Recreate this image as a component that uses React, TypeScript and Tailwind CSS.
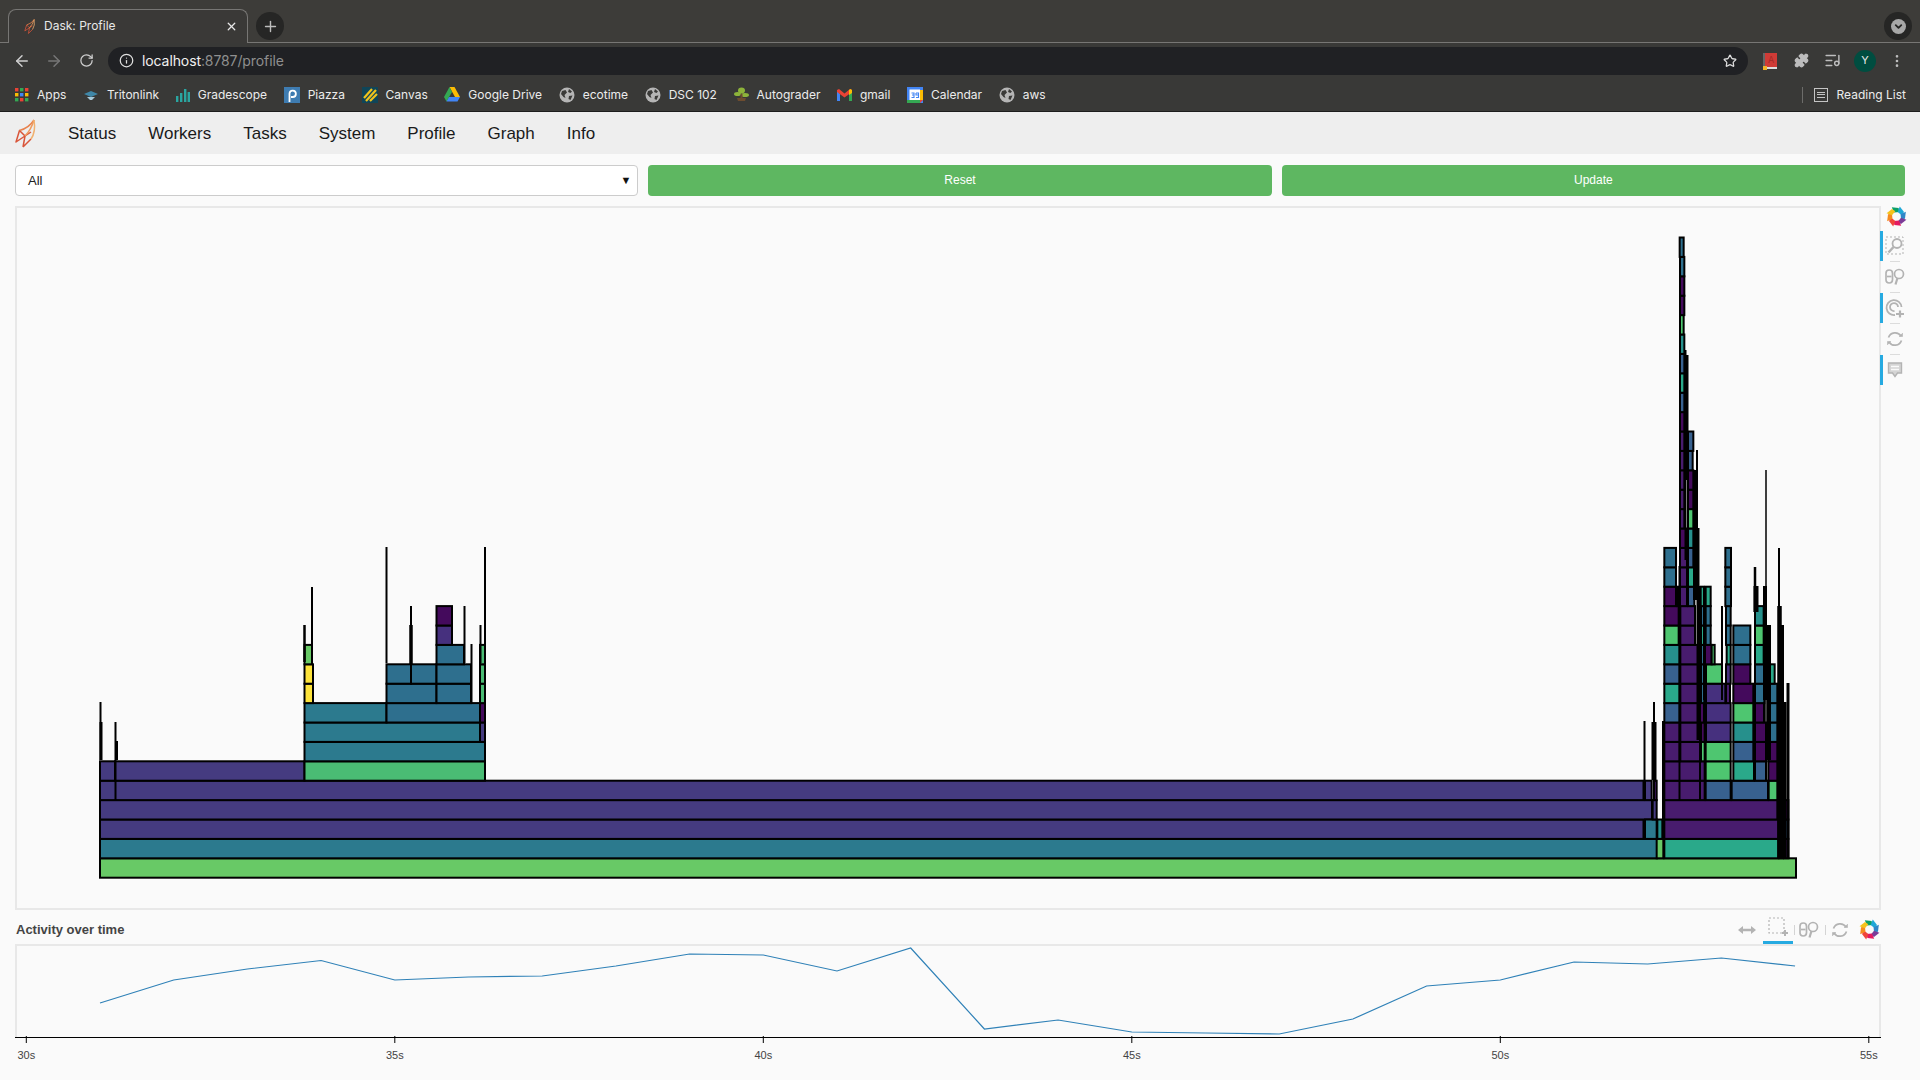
import React from 'react';
import { ArrowLeft, ArrowRight, RotateCw, Info, Star, Puzzle, ListMusic, MoreVertical, Plus, X, ChevronDown } from 'lucide-react';

const C: Record<string, string> = {
  L: '#68c966', T: '#2c7a8e', I: '#453b80', G: '#4abc74', B: '#2e6f8e', S: '#38618f',
  D: '#440a5c', P: '#481c6e', U: '#46307e', Y: '#fde33a', A: '#26908c', E: '#2aa98a', N: '#4ec670',
};

const BOTTOM = 877.7;
const STEP = 19.4;

// [level, x0, x1, colour], page coordinates
const leftBlocks: [number, number, number, string][] = [
  [0, 100, 1796, 'L'], [1, 100, 1657, 'T'], [2, 100, 1643.5, 'I'], [3, 100, 1652, 'I'], [4, 100, 1643.5, 'I'],
  [5, 100, 115, 'I'], [5, 115, 304.5, 'I'], [5, 304.5, 485, 'G'],
  [6, 304.5, 485, 'T'], [7, 304.5, 480, 'T'], [7, 480, 485, 'I'],
  [8, 304.5, 386.5, 'T'], [8, 386.5, 480, 'B'], [8, 480, 485, 'D'],
  [9, 304.5, 313, 'Y'], [9, 386.5, 436.5, 'B'], [9, 436.5, 471, 'B'], [9, 480, 485, 'G'],
  [10, 304.5, 313, 'Y'], [10, 386.5, 411, 'B'], [10, 411, 436.5, 'B'], [10, 436.5, 471, 'B'], [10, 480, 485, 'G'],
  [11, 304.5, 312, 'L'], [11, 436.5, 464, 'B'], [11, 480, 485, 'G'],
  [12, 436.5, 452, 'U'], [13, 436.5, 452, 'D'],
];

// right cluster, x read from a 3x crop that starts at x=1640
const rightBlocks: [number, number, number, string][] = [
  [1, 50, 70, 'L'], [1, 73, 415, 'E'], [1, 418, 428, 'L'], [1, 432, 445, 'P'],
  [2, 15, 50, 'T'], [2, 52, 67, 'A'], [2, 73, 415, 'P'], [2, 418, 430, 'A'], [2, 435, 445, 'S'],
  [3, 38, 50, 'I'], [3, 73, 412, 'P'], [3, 418, 445, 'D'],
  [4, 15, 35, 'I'], [4, 42, 50, 'P'], [4, 73, 194, 'P'], [4, 197, 272, 'S'], [4, 275, 384, 'S'], [4, 386, 412, 'N'],
  [5, 73, 194, 'P'], [5, 197, 272, 'N'], [5, 280, 342, 'E'], [5, 345, 378, 'S'], [5, 385, 412, 'D'],
  [6, 73, 119, 'P'], [6, 121, 181, 'P'], [6, 183, 194, 'N'], [6, 197, 272, 'N'], [6, 280, 340, 'S'], [6, 345, 378, 'D'], [6, 385, 412, 'D'],
  [7, 73, 119, 'P'], [7, 121, 181, 'P'], [7, 183, 194, 'D'], [7, 198, 272, 'U'], [7, 280, 340, 'A'], [7, 345, 378, 'D'], [7, 385, 412, 'B'],
  [8, 73, 119, 'S'], [8, 121, 176, 'P'], [8, 180, 192, 'D'], [8, 198, 272, 'U'], [8, 280, 340, 'N'], [8, 345, 372, 'D'], [8, 385, 412, 'B'],
  [9, 73, 119, 'E'], [9, 121, 176, 'P'], [9, 183, 193, 'B'], [9, 198, 256, 'U'], [9, 258, 270, 'P'], [9, 280, 340, 'D'], [9, 345, 373, 'B'], [9, 385, 412, 'B'],
  [10, 73, 119, 'S'], [10, 121, 176, 'P'], [10, 183, 193, 'B'], [10, 198, 246, 'N'], [10, 258, 272, 'U'], [10, 280, 331, 'D'], [10, 345, 373, 'B'], [10, 386, 404, 'E'],
  [11, 73, 119, 'A'], [11, 121, 176, 'P'], [11, 183, 193, 'B'], [11, 195, 215, 'D'], [11, 215, 224, 'N'], [11, 260, 272, 'E'], [11, 280, 331, 'B'], [11, 345, 371, 'E'],
  [12, 73, 116, 'N'], [12, 121, 165, 'P'], [12, 183, 193, 'E'], [12, 197, 212, 'B'], [12, 258, 272, 'B'], [12, 280, 331, 'B'], [12, 345, 371, 'N'],
  [13, 73, 116, 'D'], [13, 121, 165, 'P'], [13, 183, 193, 'B'], [13, 197, 212, 'B'], [13, 258, 272, 'B'], [13, 345, 371, 'A'],
  [14, 73, 108, 'D'], [14, 111, 117, 'E'], [14, 120, 141, 'P'], [14, 144, 163, 'S'], [14, 182, 192, 'E'], [14, 197, 212, 'E'], [14, 256, 273, 'B'],
  [15, 73, 108, 'B'], [15, 120, 141, 'P'], [15, 144, 163, 'E'], [15, 256, 273, 'B'],
  [16, 73, 108, 'B'], [16, 120, 141, 'P'], [16, 144, 160, 'S'], [16, 256, 273, 'B'],
  [17, 120, 141, 'D'], [17, 144, 160, 'A'],
  [18, 120, 133, 'P'], [18, 144, 160, 'N'], [19, 120, 133, 'P'], [19, 144, 160, 'D'], [20, 120, 133, 'P'], [20, 144, 160, 'D'],
  [21, 120, 133, 'P'], [21, 144, 158, 'S'], [22, 120, 133, 'P'], [22, 144, 160, 'S'],
  [23, 120, 133, 'D'], [24, 120, 133, 'S'], [25, 120, 133, 'E'], [26, 120, 133, 'S'], [27, 120, 133, 'A'], [28, 120, 131, 'N'],
  [29, 120, 133, 'D'], [30, 120, 133, 'D'], [31, 120, 133, 'B'], [32, 119, 131, 'B'],
];

// [x, top, bottom, width] thin calls that only read as black lines
const spikes: [number, number, number, number][] = [
  [100.5, 702, 760, 2], [101, 722, 760, 3], [115.5, 722, 800, 2], [116.5, 741, 760, 3],
  [304.5, 625, 662, 2.5], [312, 587, 663, 2], [386.5, 547, 663, 2], [411, 606, 682, 2], [411, 625, 664, 3.5],
  [464.5, 606, 663, 2], [471.5, 644, 703, 2], [480.5, 625, 663, 2], [485, 547, 760, 2],
  [1644.5, 721, 780, 2], [1654, 702, 780, 2], [1654, 722, 780, 5], [1663.5, 721, 840, 3],
  [1722, 606, 700, 2], [1755, 567, 612, 2.5], [1756, 586, 612, 5],
  [1766, 470, 760, 1.5], [1765, 586, 700, 4], [1769, 625, 760, 4],
  [1779, 548, 858, 2], [1779.5, 606, 858, 4.5], [1782, 625, 858, 4], [1788, 683, 858, 3], [1785, 702, 858, 3],
  [1685.5, 350, 560, 2], [1687, 355, 480, 3], [1695, 470, 600, 4], [1697, 450, 528, 2], [1698, 528, 740, 3],
  [1679.5, 566, 800, 2], [1700, 586, 800, 2], [1704, 586, 700, 2],
];

const series: [number, number][] = [
  [31, 1003], [32, 980], [33, 969], [34, 960.5], [35, 980], [36, 977], [37, 976], [38, 966], [39, 954], [40, 955], [41, 971], [42, 948],
  [43, 1029], [44, 1020], [45, 1032], [46, 1033], [47, 1034], [48, 1019], [49, 986], [50, 980], [51, 962], [52, 964], [53, 958], [54, 966],
];

const timeX = (t: number) => 26.3 + 73.7 * (t - 30);
const levelTop = (level: number) => BOTTOM - (level + 1) * STEP;

const Block: React.FC<{ level: number; x0: number; x1: number; color: string }> = ({ level, x0, x1, color }) => (
  <rect x={x0} y={levelTop(level)} width={x1 - x0} height={STEP} fill={C[color]} stroke="#000" strokeWidth={2} />
);

const BokehLogo: React.FC = () => (
  <svg width="21" height="21" viewBox="-10.5 -10.5 21 21">
    {['#0c9f68', '#1fa8d8', '#2f87c8', '#7c3b97', '#e5195f', '#f0463a', '#f68b1f', '#f5c31c'].map((c, i) => (
      <polygon key={c} points="-3,-10 3.6,-8 3.6,-4 -1.6,-4.4" fill={c} transform={`rotate(${i * 45 - 10})`} />
    ))}
  </svg>
);

const Gray = 'stroke-[#b3b3b3] fill-none';

const BoxZoomIcon = () => (
  <svg width="20" height="20" viewBox="0 0 20 20" className={Gray} strokeWidth="1.8">
    <rect x="1" y="1" width="17" height="17" strokeDasharray="2 2" strokeWidth="1" />
    <circle cx="12" cy="7.5" r="4.5" />
    <path d="M8.5 11 L3.5 16.5" strokeWidth="2.5" />
  </svg>
);
const BoxPlusIcon = () => (
  <svg width="20" height="20" viewBox="0 0 20 20" className={Gray}>
    <rect x="1" y="1" width="15" height="15" strokeDasharray="2 2" strokeWidth="1.2" />
    <path d="M14 16 H20 M17 13 V19" strokeWidth="2" />
  </svg>
);
const WheelPanIcon = () => (
  <svg width="20" height="18" viewBox="0 0 20 18" className={Gray} strokeWidth="1.7">
    <rect x="1" y="2" width="6.5" height="13" rx="3.25" />
    <path d="M2 8.5 H6.5" />
    <circle cx="14" cy="6" r="4.5" />
    <path d="M12.5 10 L10.5 16.5" strokeWidth="2.2" />
  </svg>
);
const WheelZoomIcon = () => (
  <svg width="20" height="20" viewBox="0 0 20 20" className={Gray} strokeWidth="1.8">
    <path d="M10 17 A7.5 7.5 0 1 1 16.5 9" />
    <path d="M9.5 13 A4 4 0 1 1 13 9" />
    <path d="M11 16 H19 M15 12.5 V19.5" strokeWidth="2.2" />
  </svg>
);
const ResetIcon = () => (
  <svg width="18" height="18" viewBox="0 0 18 18" className={Gray} strokeWidth="1.7">
    <path d="M2.5 7.5 A7 7 0 0 1 15 6" />
    <path d="M15.5 10.5 A7 7 0 0 1 3 12" />
    <path d="M13 6.5 H16.5 V3" fill="#b3b3b3" strokeWidth="0.6" />
    <path d="M5 11.5 H1.5 V15" fill="#b3b3b3" strokeWidth="0.6" />
  </svg>
);
const HoverIcon = () => (
  <svg width="16" height="18" viewBox="0 0 16 18" className={Gray} strokeWidth="1.4">
    <path d="M1.5 2 H14.5 V12 H10.5 L8 15.5 L5.5 12 H1.5 Z" fill="#d4d4d4" />
    <path d="M4 5.5 H12 M4 8.5 H12" stroke="#fafafa" />
  </svg>
);
const PanIcon = () => (
  <svg width="20" height="12" viewBox="0 0 20 12">
    <path d="M1 6 L6 2 V4.8 H14 V2 L19 6 L14 10 V7.2 H6 V10 Z" fill="#b3b3b3" />
  </svg>
);

const GlobeIcon = () => (
  <svg width="16" height="16" viewBox="0 0 16 16">
    <circle cx="8" cy="8" r="7.5" fill="#b5b5b5" />
    <path d="M3 4 L6.5 3 L8 5.5 L5.5 8 L6.5 11 L4.5 10 L2 7 Z M10 2 L13 4.5 L11.5 6 L9 5 Z M10 9 L13.5 8.5 L11.5 13 L9.5 12 Z" fill="#3a3a38" />
  </svg>
);

const favicons: Record<string, React.ReactNode> = {
  Apps: (
    <svg width="14" height="14" viewBox="0 0 14 14">
      {[0, 5, 10].flatMap((y, r) =>
        [0, 5, 10].map((x, c) => (
          <rect key={`${r}${c}`} x={x} y={y} width="3.4" height="3.4" fill={['#ea4335', '#fbbc04', '#34a853', '#4285f4'][(r + c * 2) % 4]} />
        )),
      )}
    </svg>
  ),
  Tritonlink: (
    <svg width="16" height="16" viewBox="0 0 16 16">
      <path d="M1 7 L8 4 L15 7 L8 10 Z" fill="#3f87a8" />
      <path d="M4 10 L12 10 L9 13 L7 13 Z" fill="#a7c8d8" />
    </svg>
  ),
  Gradescope: (
    <svg width="14" height="16" viewBox="0 0 14 16">
      <path d="M0 9h2.4v6H0zM4 6h2.4v9H4zM8 2h2.4v13H8zM11.6 5H14v10h-2.4z" fill="#2aa5a0" />
    </svg>
  ),
  Piazza: (
    <svg width="16" height="16" viewBox="0 0 16 16">
      <rect width="16" height="16" fill="#3e7cb1" />
      <path d="M5.5 15 V6.5 A3.2 3.2 0 1 1 8.7 10 H7" fill="none" stroke="#fff" strokeWidth="1.8" />
    </svg>
  ),
  Canvas: (
    <svg width="16" height="16" viewBox="0 0 16 16">
      <rect width="16" height="16" fill="#0f4558" />
      <path d="M2 11 L10 2 M4 14 L14 3 M8 14 L15 7" stroke="#f1c21b" strokeWidth="2.2" />
    </svg>
  ),
  'Google Drive': (
    <svg width="16" height="15" viewBox="0 0 16 15">
      <path d="M5.5 0 H10.5 L16 10 H11 Z" fill="#fbbc04" />
      <path d="M5.5 0 L0 10 L2.5 14.5 L8 5 Z" fill="#34a853" />
      <path d="M2.5 14.5 H13.5 L16 10 H5 Z" fill="#4285f4" />
    </svg>
  ),
  ecotime: <GlobeIcon />,
  'DSC 102': <GlobeIcon />,
  Autograder: (
    <svg width="15" height="15" viewBox="0 0 15 15">
      <ellipse cx="7.5" cy="3.5" rx="3.5" ry="3" fill="#8db33a" />
      <ellipse cx="3.5" cy="7" rx="3.5" ry="2" fill="#8db33a" />
      <ellipse cx="11" cy="8" rx="4" ry="2" fill="#8db33a" />
      <path d="M6.5 7 h2 v4 h-2z" fill="#6d4c2f" />
      <path d="M3 11 h9 l-1 3 h-7z" fill="#6d4c2f" />
    </svg>
  ),
  gmail: (
    <svg width="15" height="12" viewBox="0 0 15 12">
      <path d="M0 1.5 V12 H3 V5 Z" fill="#4285f4" />
      <path d="M15 1.5 V12 H12 V5 Z" fill="#34a853" />
      <path d="M0 1 L2 0 L7.5 4.5 L13 0 L15 1 V3 L7.5 8.5 L0 3 Z" fill="#ea4335" />
      <path d="M12 1 L13.5 0 L15 1 V4 L12 6 Z" fill="#fbbc04" />
    </svg>
  ),
  Calendar: (
    <svg width="16" height="16" viewBox="0 0 16 16">
      <rect width="16" height="16" fill="#4285f4" />
      <rect x="2.5" y="2.5" width="10.5" height="10.5" fill="#fff" />
      <rect y="13" width="13" height="3" fill="#34a853" />
      <rect x="13" y="3" width="3" height="10" fill="#fbbc04" />
      <path d="M13 13 h3 l-3 3z" fill="#ea4335" />
      <path d="M4.5 6 H7 V8 H5 M7 8 V10.5 H4.5 M9 6 H11.5 V10.5 H9 M9 6 V8 H11.5" fill="none" stroke="#4285f4" strokeWidth="1.1" />
    </svg>
  ),
  aws: <GlobeIcon />,
};

const DaskLogo: React.FC<{ size: number; h: number }> = ({ size, h }) => (
  <svg width={size} height={h} viewBox="5 4 22 29" fill="none" stroke="#e4794a" strokeWidth="1.5" strokeLinejoin="round">
    <path d="M6 27 L9.5 15.5 L15 21 Z" stroke="#d9553a" />
    <path d="M13 32 L15 21 L21 17 M13 32 L21 24" stroke="#d9553a" />
    <path d="M9.5 15.5 Q19 13 24 5" stroke="#e8824e" />
    <path d="M15 21 Q21 15 24 5" stroke="#ee9a5c" />
    <path d="M21 24 Q26 17 24 5" stroke="#f0b070" />
  </svg>
);

const BrowserChrome: React.FC = () => (
  <div className="font-['Inter',sans-serif] shrink-0">
    {/* Tab strip */}
    <div className="h-[43px] bg-[#3d3c39] border-b border-[#777674] flex items-end pl-2 relative">
      <div className="w-[240px] h-[34px] -mb-px bg-[#3a3937] border border-b-0 border-[#777674] rounded-t-lg flex items-center pl-[15px] pr-[9px]">
        <DaskLogo size={12} h={15} />
        <span className="ml-[8px] pb-[1px] text-[12px] text-[#e8e8e8] flex-1">Dask: Profile</span>
        <X size={13} className="text-[#e8e8e8]" strokeWidth={2.4} />
      </div>
      <div className="ml-2 mb-[2px] w-[28px] h-[28px] rounded-full bg-[#262625] flex items-center justify-center">
        <Plus size={17} className="text-[#bdbdbd]" />
      </div>
      <div className="absolute right-[8px] top-[12px] w-[28px] h-[28px] rounded-full bg-[#262625] flex items-center justify-center">
        <div className="w-[15px] h-[15px] rounded-full bg-[#a8a8a8] flex items-center justify-center">
          <ChevronDown size={11} className="text-[#262625]" strokeWidth={4} />
        </div>
      </div>
    </div>
    {/* Toolbar */}
    <div className="h-[32px] bg-[#393937] flex items-center pt-[3px]">
      <ArrowLeft size={18} className="ml-[13px] text-[#cfcfcf]" />
      <ArrowRight size={18} className="ml-[14px] text-[#777]" />
      <RotateCw size={15} className="ml-[16px] text-[#cfcfcf]" />
      <div className="ml-[14px] w-[1640px] h-[28px] rounded-full bg-[#202124] flex items-center pl-[11px]">
        <Info size={15} className="text-[#e0e0e0]" />
        <span className="ml-[8px] text-[14px] text-[#f0f0f0] tracking-[-0.1px]">
          localhost<span className="text-[#8f8f8f]">:8787/profile</span>
        </span>
        <Star size={14} className="ml-auto mr-[11px] text-[#dcdcdc]" strokeWidth={2.2} />
      </div>
      <div className="ml-[15px] relative w-[14px] h-[16px] bg-[#cf3b36] border-l-2 border-b-2 border-l-[#666] border-b-[#ddd] flex items-center justify-center text-[9px] text-[#a52a28]">
        A
        <div className="absolute -left-[2px] -bottom-[3px] w-[4px] h-[4px] bg-[#f0b429]" />
      </div>
      <Puzzle size={15} className="ml-[17px] text-[#bdbdbd] fill-[#bdbdbd]" />
      <ListMusic size={17} className="ml-[15px] text-[#bdbdbd]" />
      <div className="ml-[13px] w-[22px] h-[22px] rounded-full bg-[#004d40] text-[#e8e8e8] text-[11px] flex items-center justify-center">Y</div>
      <MoreVertical size={16} className="ml-[13px] text-[#bdbdbd]" />
    </div>
    {/* Bookmarks */}
    <div className="h-[37px] bg-[#393937] border-b border-[#1d1d1c] flex items-center pl-[15px] pt-[3px] text-[12px] text-[#ececec]">
      <div className="flex items-center gap-[16.6px]">
        {Object.keys(favicons).map((name) => (
          <div key={name} className="flex items-center gap-2">
            {favicons[name]}
            <span>{name}</span>
          </div>
        ))}
      </div>
      <div className="ml-auto flex items-center pr-[14px]">
        <div className="w-px h-[16px] bg-[#6c6c6a] mr-[11px]" />
        <div className="w-[14px] h-[14px] border-[1.5px] border-[#c4c4c4] mr-[9px] flex flex-col justify-center gap-[1.5px] px-[2px]">
          <div className="h-px bg-[#c4c4c4]" />
          <div className="h-px bg-[#c4c4c4]" />
          <div className="h-px bg-[#c4c4c4]" />
        </div>
        <span>Reading List</span>
      </div>
    </div>
  </div>
);

const navItems = ['Status', 'Workers', 'Tasks', 'System', 'Profile', 'Graph', 'Info'];

const Navbar: React.FC = () => (
  <div className="h-[42px] bg-[#eeeeee] flex items-center pl-[15px] shrink-0">
    <DaskLogo size={22} h={29} />
    <div className="ml-[31px] pt-[2px] flex gap-[32px] text-[17px] text-[#1a1a1a]">
      {navItems.map((item) => (
        <span key={item}>{item}</span>
      ))}
    </div>
  </div>
);

const ToolSep = () => <div className="w-[10px] h-px bg-[#dcdcdc]" />;

const VerticalTools: React.FC = () => (
  <div className="w-[30px] -ml-px flex flex-col">
    <div className="h-[25px] pl-[3px] flex justify-center items-start"><BokehLogo /></div>
    {[
      { icon: <BoxZoomIcon />, active: true },
      { icon: <WheelPanIcon />, active: false },
      { icon: <WheelZoomIcon />, active: true },
      { icon: <ResetIcon />, active: false },
      { icon: <HoverIcon />, active: true },
    ].map((tool, i) => (
      <div key={i} className="h-[31px] w-[27px] flex flex-col">
        <div className={`h-[30px] flex items-center justify-center border-l-[3px] ${tool.active ? 'border-[#26aae1]' : 'border-transparent'}`}>
          {tool.icon}
        </div>
        {i < 4 && <div className="pl-[10px]"><ToolSep /></div>}
      </div>
    ))}
  </div>
);

const FlameChart: React.FC = () => (
  <div className="flex h-[704px] shrink-0 pl-[15px]">
    <div className="w-[1866px] h-full border-2 border-[#e8e8e8] overflow-hidden">
      <svg width="1862" height="700" viewBox="17 208 1862 700" className="block">
        {leftBlocks.map(([l, a, b, c], i) => (
          <Block key={i} level={l} x0={a} x1={b} color={c} />
        ))}
        {rightBlocks.map(([l, a, b, c], i) => (
          <Block key={i} level={l} x0={1640 + a / 3} x1={1640 + b / 3} color={c} />
        ))}
        {spikes.map(([x, top, bottom, w], i) => (
          <rect key={i} x={x - w / 2} y={top} width={w} height={bottom - top} fill="#000" />
        ))}
      </svg>
    </div>
    <VerticalTools />
  </div>
);

const ActivityChart: React.FC = () => {
  const ticks = [30, 35, 40, 45, 50, 55];
  return (
    <div className="pl-[15px] shrink-0">
      <div className="w-[1866px] h-[34px] flex items-center relative">
        <span className="pl-[1px] pt-[6px] text-[13px] font-bold text-[#444]">Activity over time</span>
        <div className="ml-auto flex items-center pr-[1px]">
          <div className="pt-[5px] mr-[6px]"><PanIcon /></div>
          <div className="w-[30px] h-[34px] pt-[3px] flex items-center justify-center border-b-[3px] border-[#26aae1]"><BoxPlusIcon /></div>
          <div className="w-px h-[10px] mt-[5px] bg-[#d4d4d4] mx-[1px]" />
          <div className="mx-[3px] pt-[5px]"><WheelPanIcon /></div>
          <div className="w-px h-[10px] mt-[5px] bg-[#d4d4d4] mx-[3px]" />
          <div className="ml-[2px] mr-[6px] pt-[5px]"><ResetIcon /></div>
          <div className="ml-[4px] pt-[5px]"><BokehLogo /></div>
        </div>
      </div>
      <svg width="1866" height="125" viewBox="15 944 1866 125" className="block">
        <path d="M16 1037 V945 H1880 V1037" fill="none" stroke="#e8e8e8" strokeWidth="2" />
        <polyline
          points={series.map(([t, y]) => `${timeX(t)},${y}`).join(' ')}
          fill="none"
          stroke="#2f81b7"
          strokeWidth="1.2"
        />
        <path d="M15 1037.5 H1881" stroke="#000" strokeWidth="1" />
        {ticks.map((t) => (
          <g key={t}>
            <path d={`M${timeX(t)} 1036 V1043`} stroke="#000" strokeWidth="1" />
            <text x={timeX(t)} y={1059} textAnchor="middle" fontSize="11" fill="#444">{t}s</text>
          </g>
        ))}
      </svg>
    </div>
  );
};

export default function App() {
  return (
    <div className="w-[1920px] h-[1080px] overflow-hidden bg-[#fafafa] flex flex-col font-['Liberation_Sans',sans-serif]">
      <BrowserChrome />
      <Navbar />
      <div className="grid grid-cols-3 gap-[10px] px-[15px] mt-[11px] mb-[10px] h-[31px] shrink-0">
        <div className="bg-white border border-[#ccc] rounded-[4px] flex items-center justify-between pl-[12px] pr-[6px] text-[13px] text-[#222]">
          <span>All</span>
          <span className="text-[11px] text-[#111]">▼</span>
        </div>
        <div className="bg-[#5eb761] rounded-[4px] flex items-center justify-center pb-[2px] text-[12px] text-white">Reset</div>
        <div className="bg-[#5eb761] rounded-[4px] flex items-center justify-center pb-[2px] text-[12px] text-white">Update</div>
      </div>
      <FlameChart />
      <ActivityChart />
    </div>
  );
}
